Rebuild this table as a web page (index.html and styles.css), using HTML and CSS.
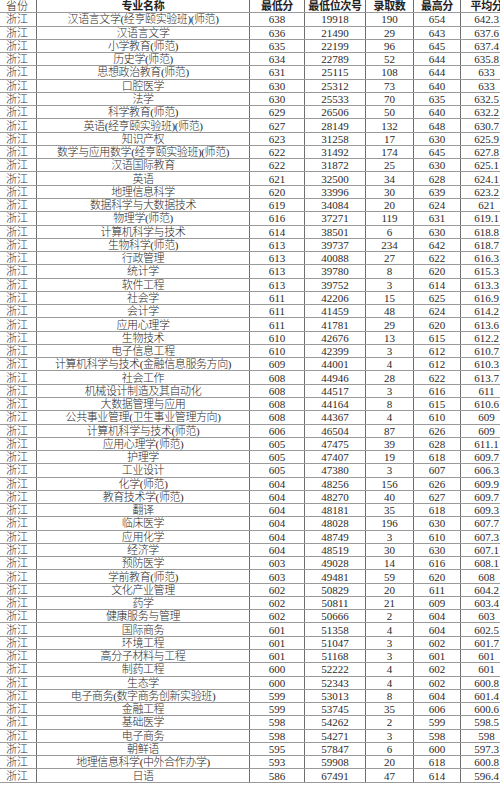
FILE: index.html
```html
<!DOCTYPE html>
<html lang="zh-CN">
<head>
<meta charset="utf-8">
<title>浙江录取分数</title>
<link rel="stylesheet" href="styles.css">
</head>
<body>
<div class="sheet">
<div class="row head"><span class="prov">省份</span><span class="name b">专业名称</span><span class="b">最低分</span><span class="b">最低位次号</span><span class="b">录取数</span><span class="b">最高分</span><span class="b">平均分</span></div>
<div class="row"><span class="prov">浙江</span><span class="name">汉语言文学(经亨颐实验班)(师范)</span><span>638</span><span>19918</span><span>190</span><span>654</span><span>642.3</span></div>
<div class="row"><span class="prov">浙江</span><span class="name">汉语言文学</span><span>636</span><span>21490</span><span>29</span><span>643</span><span>637.6</span></div>
<div class="row"><span class="prov">浙江</span><span class="name">小学教育(师范)</span><span>635</span><span>22199</span><span>96</span><span>645</span><span>637.4</span></div>
<div class="row"><span class="prov">浙江</span><span class="name">历史学(师范)</span><span>634</span><span>22789</span><span>52</span><span>644</span><span>635.8</span></div>
<div class="row"><span class="prov">浙江</span><span class="name">思想政治教育(师范)</span><span>631</span><span>25115</span><span>108</span><span>644</span><span>633</span></div>
<div class="row"><span class="prov">浙江</span><span class="name">口腔医学</span><span>630</span><span>25312</span><span>73</span><span>640</span><span>633</span></div>
<div class="row"><span class="prov">浙江</span><span class="name">法学</span><span>630</span><span>25533</span><span>70</span><span>635</span><span>632.5</span></div>
<div class="row"><span class="prov">浙江</span><span class="name">科学教育(师范)</span><span>629</span><span>26506</span><span>50</span><span>640</span><span>632.2</span></div>
<div class="row"><span class="prov">浙江</span><span class="name">英语(经亨颐实验班)(师范)</span><span>627</span><span>28149</span><span>132</span><span>648</span><span>630.7</span></div>
<div class="row"><span class="prov">浙江</span><span class="name">知识产权</span><span>623</span><span>31258</span><span>17</span><span>630</span><span>625.9</span></div>
<div class="row"><span class="prov">浙江</span><span class="name">数学与应用数学(经亨颐实验班)(师范)</span><span>622</span><span>31492</span><span>174</span><span>645</span><span>627.8</span></div>
<div class="row"><span class="prov">浙江</span><span class="name">汉语国际教育</span><span>622</span><span>31872</span><span>25</span><span>630</span><span>625.1</span></div>
<div class="row"><span class="prov">浙江</span><span class="name">英语</span><span>621</span><span>32500</span><span>34</span><span>628</span><span>624.1</span></div>
<div class="row"><span class="prov">浙江</span><span class="name">地理信息科学</span><span>620</span><span>33996</span><span>30</span><span>639</span><span>623.2</span></div>
<div class="row"><span class="prov">浙江</span><span class="name">数据科学与大数据技术</span><span>619</span><span>34084</span><span>20</span><span>624</span><span>621</span></div>
<div class="row"><span class="prov">浙江</span><span class="name">物理学(师范)</span><span>616</span><span>37271</span><span>119</span><span>631</span><span>619.1</span></div>
<div class="row"><span class="prov">浙江</span><span class="name">计算机科学与技术</span><span>614</span><span>38501</span><span>6</span><span>630</span><span>618.8</span></div>
<div class="row"><span class="prov">浙江</span><span class="name">生物科学(师范)</span><span>613</span><span>39737</span><span>234</span><span>642</span><span>618.7</span></div>
<div class="row"><span class="prov">浙江</span><span class="name">行政管理</span><span>613</span><span>40088</span><span>27</span><span>622</span><span>616.3</span></div>
<div class="row"><span class="prov">浙江</span><span class="name">统计学</span><span>613</span><span>39780</span><span>8</span><span>620</span><span>615.3</span></div>
<div class="row"><span class="prov">浙江</span><span class="name">软件工程</span><span>613</span><span>39752</span><span>3</span><span>614</span><span>613.3</span></div>
<div class="row"><span class="prov">浙江</span><span class="name">社会学</span><span>611</span><span>42206</span><span>15</span><span>625</span><span>616.9</span></div>
<div class="row"><span class="prov">浙江</span><span class="name">会计学</span><span>611</span><span>41459</span><span>48</span><span>624</span><span>614.2</span></div>
<div class="row"><span class="prov">浙江</span><span class="name">应用心理学</span><span>611</span><span>41781</span><span>29</span><span>620</span><span>613.6</span></div>
<div class="row"><span class="prov">浙江</span><span class="name">生物技术</span><span>610</span><span>42676</span><span>13</span><span>615</span><span>612.2</span></div>
<div class="row"><span class="prov">浙江</span><span class="name">电子信息工程</span><span>610</span><span>42399</span><span>3</span><span>612</span><span>610.7</span></div>
<div class="row"><span class="prov">浙江</span><span class="name">计算机科学与技术(金融信息服务方向)</span><span>609</span><span>44001</span><span>4</span><span>612</span><span>610.3</span></div>
<div class="row"><span class="prov">浙江</span><span class="name">社会工作</span><span>608</span><span>44946</span><span>28</span><span>622</span><span>613.7</span></div>
<div class="row"><span class="prov">浙江</span><span class="name">机械设计制造及其自动化</span><span>608</span><span>44517</span><span>3</span><span>616</span><span>611</span></div>
<div class="row"><span class="prov">浙江</span><span class="name">大数据管理与应用</span><span>608</span><span>44164</span><span>8</span><span>615</span><span>610.6</span></div>
<div class="row"><span class="prov">浙江</span><span class="name">公共事业管理(卫生事业管理方向)</span><span>608</span><span>44367</span><span>4</span><span>610</span><span>609</span></div>
<div class="row"><span class="prov">浙江</span><span class="name">计算机科学与技术(师范)</span><span>606</span><span>46504</span><span>87</span><span>626</span><span>609</span></div>
<div class="row"><span class="prov">浙江</span><span class="name">应用心理学(师范)</span><span>605</span><span>47475</span><span>39</span><span>628</span><span>611.1</span></div>
<div class="row"><span class="prov">浙江</span><span class="name">护理学</span><span>605</span><span>47407</span><span>19</span><span>618</span><span>609.7</span></div>
<div class="row"><span class="prov">浙江</span><span class="name">工业设计</span><span>605</span><span>47380</span><span>3</span><span>607</span><span>606.3</span></div>
<div class="row"><span class="prov">浙江</span><span class="name">化学(师范)</span><span>604</span><span>48256</span><span>156</span><span>626</span><span>609.9</span></div>
<div class="row"><span class="prov">浙江</span><span class="name">教育技术学(师范)</span><span>604</span><span>48270</span><span>40</span><span>627</span><span>609.7</span></div>
<div class="row"><span class="prov">浙江</span><span class="name">翻译</span><span>604</span><span>48181</span><span>35</span><span>618</span><span>609.3</span></div>
<div class="row"><span class="prov">浙江</span><span class="name">临床医学</span><span>604</span><span>48028</span><span>196</span><span>630</span><span>607.7</span></div>
<div class="row"><span class="prov">浙江</span><span class="name">应用化学</span><span>604</span><span>48749</span><span>3</span><span>610</span><span>607.3</span></div>
<div class="row"><span class="prov">浙江</span><span class="name">经济学</span><span>604</span><span>48519</span><span>30</span><span>630</span><span>607.1</span></div>
<div class="row"><span class="prov">浙江</span><span class="name">预防医学</span><span>603</span><span>49028</span><span>14</span><span>616</span><span>608.1</span></div>
<div class="row"><span class="prov">浙江</span><span class="name">学前教育(师范)</span><span>603</span><span>49481</span><span>59</span><span>620</span><span>608</span></div>
<div class="row"><span class="prov">浙江</span><span class="name">文化产业管理</span><span>602</span><span>50829</span><span>20</span><span>611</span><span>604.2</span></div>
<div class="row"><span class="prov">浙江</span><span class="name">药学</span><span>602</span><span>50811</span><span>21</span><span>609</span><span>603.4</span></div>
<div class="row"><span class="prov">浙江</span><span class="name">健康服务与管理</span><span>602</span><span>50666</span><span>2</span><span>604</span><span>603</span></div>
<div class="row"><span class="prov">浙江</span><span class="name">国际商务</span><span>601</span><span>51358</span><span>4</span><span>604</span><span>602.5</span></div>
<div class="row"><span class="prov">浙江</span><span class="name">环境工程</span><span>601</span><span>51047</span><span>3</span><span>602</span><span>601.7</span></div>
<div class="row"><span class="prov">浙江</span><span class="name">高分子材料与工程</span><span>601</span><span>51168</span><span>3</span><span>601</span><span>601</span></div>
<div class="row"><span class="prov">浙江</span><span class="name">制药工程</span><span>600</span><span>52222</span><span>4</span><span>602</span><span>601</span></div>
<div class="row"><span class="prov">浙江</span><span class="name">生态学</span><span>600</span><span>52343</span><span>4</span><span>602</span><span>600.8</span></div>
<div class="row"><span class="prov">浙江</span><span class="name">电子商务(数字商务创新实验班)</span><span>599</span><span>53013</span><span>8</span><span>604</span><span>601.4</span></div>
<div class="row"><span class="prov">浙江</span><span class="name">金融工程</span><span>599</span><span>53745</span><span>35</span><span>606</span><span>600.6</span></div>
<div class="row"><span class="prov">浙江</span><span class="name">基础医学</span><span>598</span><span>54262</span><span>2</span><span>599</span><span>598.5</span></div>
<div class="row"><span class="prov">浙江</span><span class="name">电子商务</span><span>598</span><span>54271</span><span>3</span><span>598</span><span>598</span></div>
<div class="row"><span class="prov">浙江</span><span class="name">朝鲜语</span><span>595</span><span>57847</span><span>6</span><span>600</span><span>597.3</span></div>
<div class="row"><span class="prov">浙江</span><span class="name">地理信息科学(中外合作办学)</span><span>593</span><span>59908</span><span>20</span><span>618</span><span>600.8</span></div>
<div class="row"><span class="prov">浙江</span><span class="name">日语</span><span>586</span><span>67491</span><span>47</span><span>614</span><span>596.4</span></div>
</div>
</body>
</html>
```
FILE: styles.css
```css
html, body {
  margin: 0;
  padding: 0;
  background: #fff;
  overflow: hidden;
}
.sheet {
  width: 512px;
  font-family: "Liberation Serif", "Noto Sans CJK SC", serif;
  font-size: 11px;
  color: #2a2a2a;
}
.row {
  display: grid;
  grid-template-columns: 37px 213px 55px 61px 48px 47px 51px;
  height: 13.27px;
  box-sizing: border-box;
  border-bottom: 1px solid #9a9a9a;
}
.row span {
  display: flex;
  align-items: center;
  justify-content: center;
  box-sizing: border-box;
  border-right: 1px solid #6e6e6e;
  line-height: 12px;
  white-space: nowrap;
  min-width: 0;
}
.row span:last-child {
  border-right: none;
}
.row .prov {
  justify-content: flex-start;
  padding-left: 6px;
  font-weight: 300;
}
.row .name {
  letter-spacing: -0.4px;
  font-weight: 300;
}
.row .b {
  font-weight: bold;
  letter-spacing: -0.3px;
  color: #222;
}
```
